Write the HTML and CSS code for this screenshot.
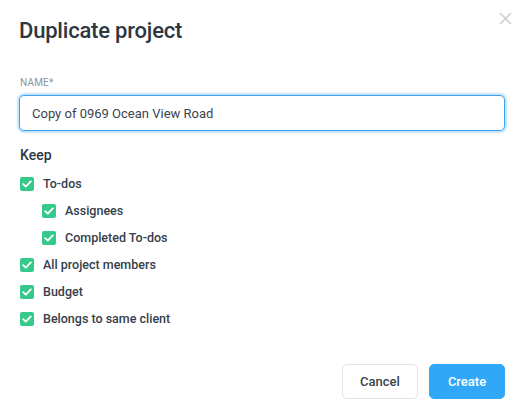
FILE: index.html
```html
<!DOCTYPE html>
<html lang="en">
<head>
    <meta charset="UTF-8">
    <meta name="viewport" content="width=device-width, initial-scale=1.0">
    <title>Duplicate project</title>

    <link rel="stylesheet" href="styles.css">
</head>
<body>
    <div class="dialog">
        <button class="fechar" aria-label="Close">
            <svg width="13" height="13" viewBox="0 0 13 13">
                <path d="M1 1 L12 12 M12 1 L1 12" stroke="#cdd0d4" stroke-width="1.6" fill="none"/>
            </svg>
        </button>

        <h1>Duplicate project</h1>

        <!-- Nome -->
        <div class="campo">
            <label class="rotulo" for="nome">NAME*</label>
            <input type="text" id="nome" class="entrada" value="Copy of 0969 Ocean View Road">
        </div>

        <!-- Opcoes -->
        <h2>Keep</h2>
        <div id="lista-opcoes"></div>

        <div class="rodape">
            <button class="botao botao-cancelar">Cancel</button>
            <button class="botao botao-criar">Create</button>
        </div>
    </div>

    <script>
        const opcoes = [
            {texto: 'To-dos', nivel: 0},
            {texto: 'Assignees', nivel: 1},
            {texto: 'Completed To-dos', nivel: 1},
            {texto: 'All project members', nivel: 0},
            {texto: 'Budget', nivel: 0},
            {texto: 'Belongs to same client', nivel: 0}
        ];
        const lista = document.getElementById('lista-opcoes');
        lista.innerHTML = opcoes.map(op => `
            <label class="opcao ${op.nivel ? 'sub' : ''}">
                <span class="caixa">
                    <svg width="10" height="8" viewBox="0 0 10 8">
                        <path d="M1.2 4.2 L3.8 6.6 L8.8 1.4" stroke="#fff" stroke-width="1.8" fill="none" stroke-linecap="round" stroke-linejoin="round"/>
                    </svg>
                </span>
                <span>${op.texto}</span>
            </label>
        `).join('');
    </script>
</body>
</html>
```

FILE: styles.css
```css
body {
    font-family: Roboto, "Liberation Sans", sans-serif;
    background-color: #fff;
    color: #353e4a;
    margin: 0;
}

.dialog {
    position: relative;
    padding: 18px 18px 0 19px;
}

.fechar {
    position: absolute;
    top: 12px;
    right: 11px;
    padding: 0;
    border: none;
    background: none;
    width: 13px;
    height: 13px;
    cursor: pointer;
}
.fechar svg { display: block; }

h1 {
    margin: 0;
    font-size: 22px;
    line-height: 26px;
    font-weight: 500;
    letter-spacing: -0.2px;
    color: #2e3642;
}

.campo { margin-top: 33px; }

.rotulo {
    display: block;
    font-size: 10px;
    line-height: 12px;
    color: #8a94a0;
    letter-spacing: 0.2px;
    padding-left: 1px;
}

.entrada {
    display: block;
    box-sizing: border-box;
    width: 100%;
    height: 36px;
    margin-top: 6px;
    padding: 0 12px;
    font-family: inherit;
    font-size: 13px;
    color: #3a4350;
    border: 1px solid #3aa2f2;
    border-radius: 5px;
    box-shadow: 0 0 0 2px rgba(58, 162, 242, 0.18), 0 0 4px rgba(58, 162, 242, 0.35);
    outline: none;
}

h2 {
    margin: 15px 0 6px 1px;
    font-size: 14px;
    line-height: 18px;
    font-weight: 500;
    color: #2e3642;
}

.opcao {
    display: flex;
    align-items: center;
    gap: 9px;
    height: 27px;
    font-size: 12.5px;
    font-weight: 500;
    padding-left: 1px;
}
.opcao.sub { padding-left: 23px; }

.caixa {
    display: flex;
    align-items: center;
    justify-content: center;
    width: 14px;
    height: 14px;
    border-radius: 2px;
    background-color: #36c98c;
}

.rodape {
    display: flex;
    justify-content: flex-end;
    gap: 11px;
    margin-top: 32px;
}

.botao {
    width: 76px;
    height: 35px;
    font-family: inherit;
    font-size: 13px;
    font-weight: 500;
    border-radius: 5px;
    cursor: pointer;
}

.botao-cancelar {
    background-color: #fff;
    color: #3a4350;
    border: 1px solid #dfe4ea;
}

.botao-criar {
    background-color: #30a8f7;
    color: #fff;
    border: 1px solid #30a8f7;
}
```
